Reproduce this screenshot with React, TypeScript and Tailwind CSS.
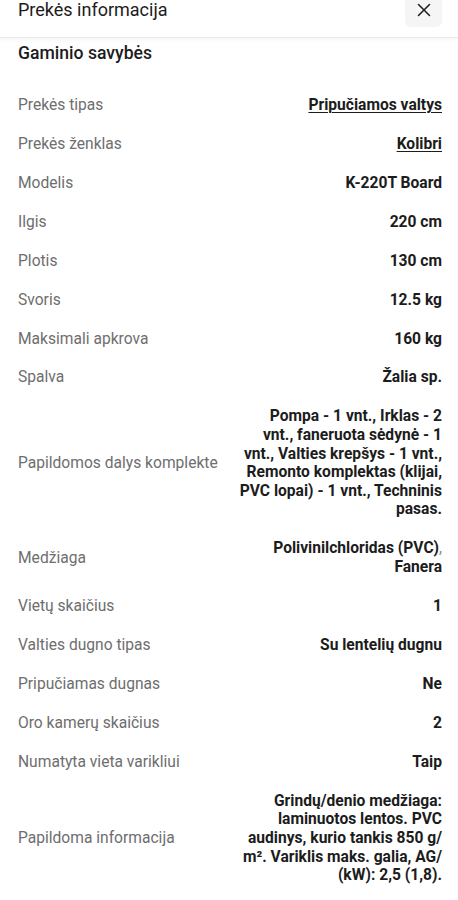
import React from "react";

type Row = { label: string; value: React.ReactNode; link?: boolean };

const rows: Row[] = [
  { label: "Prekės tipas", value: "Pripučiamos valtys", link: true },
  { label: "Prekės ženklas", value: "Kolibri", link: true },
  { label: "Modelis", value: "K-220T Board" },
  { label: "Ilgis", value: "220 cm" },
  { label: "Plotis", value: "130 cm" },
  { label: "Svoris", value: "12.5 kg" },
  { label: "Maksimali apkrova", value: "160 kg" },
  { label: "Spalva", value: "Žalia sp." },
  {
    label: "Papildomos dalys komplekte",
    value:
      "Pompa - 1 vnt., Irklas - 2 vnt., faneruota sėdynė - 1 vnt., Valties krepšys - 1 vnt., Remonto komplektas (klijai, PVC lopai) - 1 vnt., Techninis pasas.",
  },
  {
    label: "Medžiaga",
    value: (
      <>
        Polivinilchloridas (PVC)<span className="font-normal text-[#8a8a8a]">, </span>Fanera
      </>
    ),
  },
  { label: "Vietų skaičius", value: "1" },
  { label: "Valties dugno tipas", value: "Su lentelių dugnu" },
  { label: "Pripučiamas dugnas", value: "Ne" },
  { label: "Oro kamerų skaičius", value: "2" },
  { label: "Numatyta vieta varikliui", value: "Taip" },
  {
    label: "Papildoma informacija",
    value: (
      <>
        Grindų/denio medžiaga: laminuotos lentos. PVC audinys, kurio tankis 850 g/<wbr />m². Variklis maks. galia, AG/<wbr />(kW): 2,5 (1,8).
      </>
    ),
  },
];

export default function App() {
  return (
    <div
      className="w-[458px] h-[900px] overflow-hidden bg-white text-[#1f1f1f]"
      style={{ fontFamily: "Roboto, 'Noto Sans', Arial, sans-serif" }}
    >
      <div className="h-[38px] flex items-start justify-between pl-[18px] pr-[16px] border-b border-[#e9e9e9] shadow-[0_2px_4px_rgba(0,0,0,0.04)]">
        <div className="text-[18px] leading-[18px] mt-[1px] text-[#1c1c1c]">Prekės informacija</div>
        <div className="w-[37px] h-[36px] -mt-[9px] rounded-md bg-[#f5f5f5] flex items-center justify-center">
          <svg width="14" height="14" viewBox="0 0 14 14" className="mt-[2px]">
            <path d="M1.5 1.5 L12.5 12.5 M12.5 1.5 L1.5 12.5" stroke="#222" strokeWidth="1.6" strokeLinecap="round" />
          </svg>
        </div>
      </div>
      <div className="pl-[18px] pr-[16px]">
        <div className="text-[17.6px] leading-[24px] font-medium pt-[3px] pb-[20.5px] text-[#1c1c1c]">Gaminio savybės</div>
        <div>
          {rows.map((r, i) => (
            <div key={i} className="grid grid-cols-[1fr_205px] gap-x-[10px] items-center py-[10.2px]">
              <div className="text-[15.6px] leading-[18.6px] text-[#6e6e6e]">{r.label}</div>
              <div
                className={
                  "text-[15.6px] leading-[18.6px] font-bold text-right text-[#1c1c1c] break-words " +
                  (r.link ? "underline underline-offset-2 decoration-1" : "")
                }
              >
                {r.value}
              </div>
            </div>
          ))}
        </div>
      </div>
    </div>
  );
}
